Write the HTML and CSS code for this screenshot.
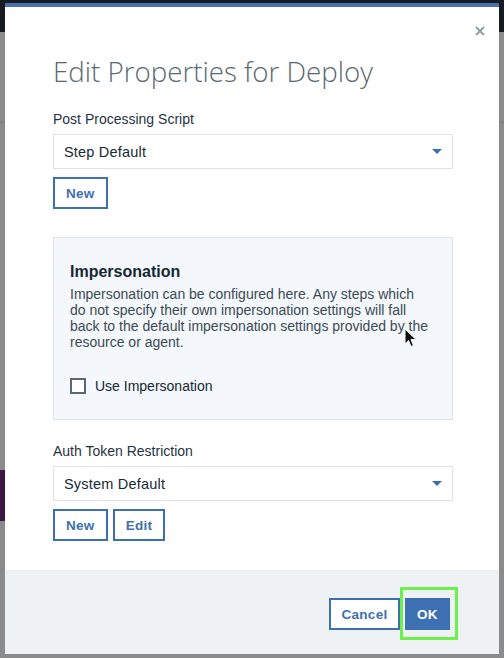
FILE: index.html
```html
<!DOCTYPE html>
<html>
<head>
<meta charset="utf-8">
<link rel="stylesheet" href="styles.css">
</head>
<body>
<div class="backdrop">
  <div class="topbar"></div>
  <div class="bg-rule"></div>
  <div class="side-tag"></div>
</div>
<div class="modal">
  <button class="close" aria-label="Close">
    <svg width="10" height="10" viewBox="0 0 10 10"><path d="M1 1L9 9M9 1L1 9" stroke="#8c9ba5" stroke-width="1.8" fill="none"/></svg>
  </button>
  <div class="body">
    <h1 class="title">Edit Properties for Deploy</h1>
    <div class="field">
      <label class="label">Post Processing Script</label>
      <div class="select"><span>Step Default</span><span class="caret"></span></div>
      <div class="btn-row"><button class="btn">New</button></div>
    </div>
    <div class="panel">
      <h2 class="panel-title">Impersonation</h2>
      <p class="panel-text">Impersonation can be configured here. Any steps which<br>do not specify their own impersonation settings will fall<br>back to the default impersonation settings provided by the<br>resource or agent.</p>
      <label class="check"><span class="box"></span>Use Impersonation</label>
    </div>
    <div class="field second">
      <label class="label">Auth Token Restriction</label>
      <div class="select"><span>System Default</span><span class="caret"></span></div>
      <div class="btn-row"><button class="btn">New</button><button class="btn">Edit</button></div>
    </div>
  </div>
  <div class="footer">
    <button class="btn cancel">Cancel</button>
    <button class="btn primary">OK</button>
    <span class="highlight"></span>
  </div>
</div>
<svg class="cursor" width="14" height="20" viewBox="0 0 14 20"><path d="M1 1L1 16L4.5 12.5L7 18.5L9.5 17.5L7 11.5L12 11.5Z" fill="#111" stroke="#fff" stroke-width="1"/></svg>
</body>
</html>
```
FILE: styles.css
```css
* { box-sizing: border-box; }
html, body { margin: 0; padding: 0; }
body {
  width: 504px;
  height: 658px;
  overflow: hidden;
  background: #8b8b8b;
  font-family: "Liberation Sans", Arial, sans-serif;
  position: relative;
}
.backdrop { position: absolute; inset: 0; }
.topbar { height: 32px; background: #161b21; }
.bg-rule { margin-top: 90px; height: 1px; background: #7e7e7e; }
.side-tag {
  position: absolute; left: 0; top: 470px; width: 5px; height: 51px;
  background: #3c1744;
}
.modal {
  position: absolute; left: 5px; top: 3px; width: 494px; height: 651px;
  background: #fff; border-top: 4px solid #4a6fae;
  display: flex; flex-direction: column;
}
.close {
  position: absolute; right: 14px; top: 19px; border: 0; background: none; padding: 0;
  width: 10px; height: 10px; display: flex;
}
.body { flex: 1; padding: 45px 46px 0 48px; }
.title {
  margin: 0; font-family: "Open Sans", sans-serif; font-weight: 300; font-size: 27.7px;
  line-height: 38px; color: #5a6872; letter-spacing: 0;
}
.label { display: block; font-size: 14px; line-height: 18px; color: #26333f; margin-top: 20px; }
.second .label { margin-top: 22px; }
.select {
  margin-top: 6px; height: 35px; border: 1px solid #dfe3e6; display: flex; align-items: center;
  justify-content: space-between; padding: 0 10px 0 10px; font-size: 14.5px; color: #152935;
  letter-spacing: 0.2px;
}
.caret {
  width: 0; height: 0; border-left: 5.5px solid transparent; border-right: 5.5px solid transparent;
  border-top: 5px solid #3d70b2;
}
.btn-row { display: flex; gap: 5px; margin-top: 8px; }
.btn {
  height: 32px; border: 2px solid #3d70b2; background: #fff; color: #3d70b2; font-weight: bold;
  font-family: "Liberation Sans", Arial, sans-serif; font-size: 13.5px; padding: 0 11px; letter-spacing: 0.3px;
}
.panel {
  margin-top: 28px; background: #f4f7fb; border: 1px solid #dfe3e6; height: 183px;
  padding: 24px 16px 0 16px;
}
.panel-title { margin: 0; font-size: 16px; line-height: 20px; color: #152935; font-weight: bold; }
.panel-text { margin: 4px 0 0; font-size: 14px; line-height: 16px; color: #3c4a55; white-space: nowrap; }
.check { display: flex; align-items: center; gap: 9px; font-size: 14px; color: #152935; margin-top: 28px; }
.box { width: 16px; height: 16px; border: 2px solid #5a6872; background: #fff; }
.footer {
  height: 84px; background: #eff2f5; display: flex; justify-content: flex-end; align-items: flex-start;
  padding: 28px 49px 0 0; gap: 5px; position: relative;
}
.cancel { width: 71px; padding: 0; }
.primary { background: #3d70b2; color: #fff; width: 45px; padding: 0; }
.highlight {
  position: absolute; left: 395px; top: 17px; width: 58px; height: 53px; border: 3px solid #6ef04a;
}
.cursor { position: absolute; left: 404px; top: 328px; }
```
